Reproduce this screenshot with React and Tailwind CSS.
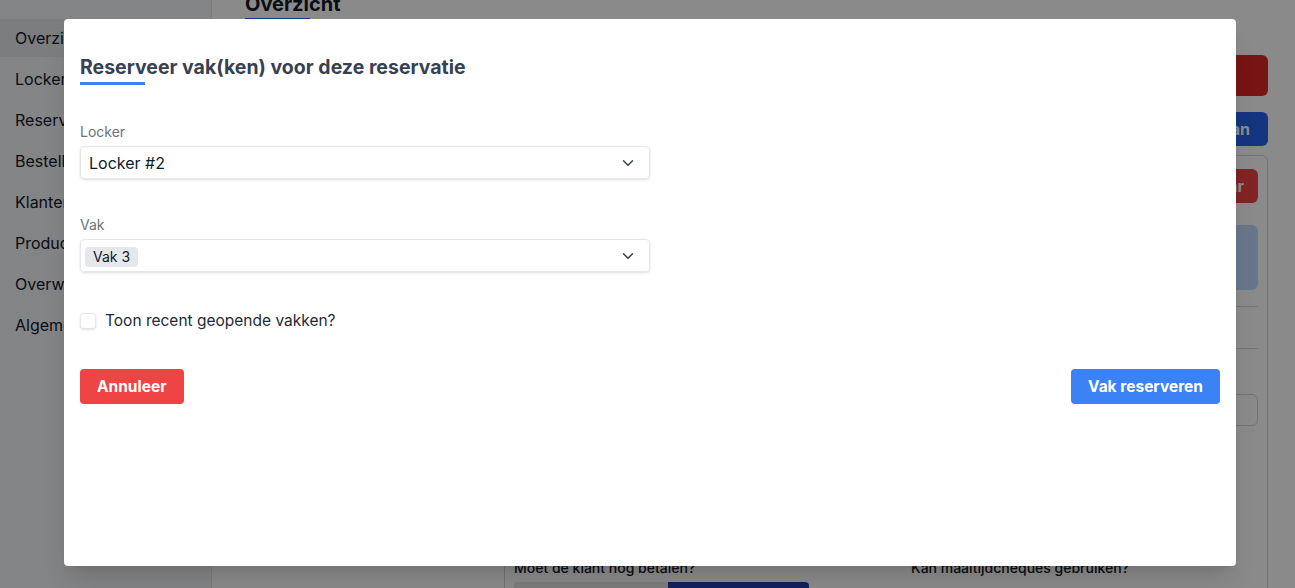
import { ChevronDown, Check } from "lucide-react";

const navItems = [
  "Overzicht",
  "Lockers",
  "Reservaties",
  "Bestellingen",
  "Klanten",
  "Producten",
  "Overwegingen",
  "Algemeen",
];

function Background() {
  return (
    <div className="flex h-[588px] w-full overflow-hidden bg-white">
      {/* Sidebar */}
      <aside className="w-[212px] shrink-0 bg-[#f3f4f6] border-r border-[#e5e7eb] pt-[19px]">
        {navItems.map((item, i) => (
          <div
            key={item}
            className={
              i === 0
                ? "h-[38px] pl-[15px] flex items-center bg-[#e5e7eb] text-[#111827] text-base mb-[3px]"
                : "h-[38px] pl-[15px] flex items-center text-[#111827] text-base mb-[3px]"
            }
          >
            {item}
          </div>
        ))}
      </aside>

      {/* Main */}
      <main className="flex-1">
        <div className="pl-[33px] -mt-[10px]">
          <h2 className="text-xl font-bold text-[#111827] leading-7">Overzicht</h2>
          <div className="w-[65px] h-[3px] bg-[#2563eb]"></div>
        </div>

        <div className="flex">
          <div className="w-[292px] shrink-0"></div>
          <div className="w-[764px] shrink-0 flex flex-col items-end">
            <div className="mt-[34px] w-[120px] h-[41px] rounded-md bg-[#dc2626]"></div>
            <div className="mt-[16px] w-[140px] h-[34px] rounded-md bg-[#2563eb] text-white font-bold flex items-center justify-end pr-[18px]">
              Opslaan
            </div>
            <div className="mt-[9px] w-full h-[500px] border border-[#d1d5db] rounded-md px-[9px] pt-[13px] flex flex-col items-end">
              <div className="w-[90px] h-[34px] rounded-md bg-[#ef4444] text-white font-bold flex items-center justify-end pr-[14px]">
                Bewaar
              </div>
              <div className="mt-[22px] w-full h-[65px] rounded-md bg-[#bfdbfe]"></div>
              <div className="mt-[16px] w-full border-t border-[#d1d5db]"></div>
              <div className="mt-[41px] w-full border-t border-[#d1d5db]"></div>
              <div className="mt-[45px] w-[50px] h-[32px] rounded-md border border-[#d1d5db] flex items-center justify-center">
                <Check size={16} strokeWidth={2.5} className="text-[#1f2937] -ml-[10px]" />
              </div>
              <div className="mt-[132px] w-full flex text-sm text-[#111827] font-medium">
                <div className="w-[397px]">
                  <div>Moet de klant nog betalen?</div>
                  <div className="mt-[4px] flex">
                    <div className="w-[154px] h-[30px] bg-[#e5e7eb] rounded-l"></div>
                    <div className="w-[141px] h-[30px] bg-[#1e40af] rounded-r"></div>
                  </div>
                </div>
                <div>Kan maaltijdcheques gebruiken?</div>
              </div>
            </div>
          </div>
        </div>
      </main>
    </div>
  );
}

function Modal() {
  return (
    <div className="w-[1172px] h-[547px] bg-white rounded shadow-xl px-4 pt-[36px]">
      <h1 className="text-[19.5px] font-bold text-[#374151] leading-6">
        Reserveer vak(ken) voor deze reservatie
      </h1>
      <div className="w-[65px] h-[3px] bg-[#3b82f6] mt-[3px]"></div>

      <div className="w-[570px]">
        <label className="block mt-[37px] text-sm text-[#6b7280] leading-5">Locker</label>
        <div className="mt-[4px] h-[33px] rounded border border-[#e5e7eb] shadow-sm flex items-center pl-[8px] pr-[12px]">
          <span className="flex-1 text-base text-[#111827]">Locker #2</span>
          <ChevronDown size={18} strokeWidth={2} className="text-[#374151]" />
        </div>

        <label className="block mt-[36px] text-sm text-[#6b7280] leading-5">Vak</label>
        <div className="mt-[4px] h-[33px] rounded border border-[#e5e7eb] shadow-sm flex items-center pl-[4px] pr-[12px]">
          <span className="flex-1">
            <span className="inline-flex items-center h-[20px] px-[8px] rounded bg-[#e5e7eb] text-sm text-[#111827]">
              Vak 3
            </span>
          </span>
          <ChevronDown size={18} strokeWidth={2} className="text-[#374151]" />
        </div>

        <label className="mt-[37px] flex items-center gap-[9px]">
          <span className="w-4 h-4 rounded border border-[#e5e7eb] bg-white shadow-sm"></span>
          <span className="text-[15.5px] text-[#1f2937]">Toon recent geopende vakken?</span>
        </label>
      </div>

      <div className="mt-[37px] flex justify-between">
        <button className="h-[35px] px-[17px] rounded bg-[#ef4444] text-white font-bold text-[15.5px]">
          Annuleer
        </button>
        <button className="h-[35px] px-[17px] rounded bg-[#3b82f6] text-white font-bold text-[15.5px]">
          Vak reserveren
        </button>
      </div>
    </div>
  );
}

export default function App() {
  return (
    <div className="relative h-[588px] w-full overflow-hidden font-['Inter','Noto_Sans',sans-serif]">
      <Background />
      <div className="absolute inset-0 bg-black/[0.46] pl-[64px] pt-[19px]">
        <Modal />
      </div>
    </div>
  );
}
